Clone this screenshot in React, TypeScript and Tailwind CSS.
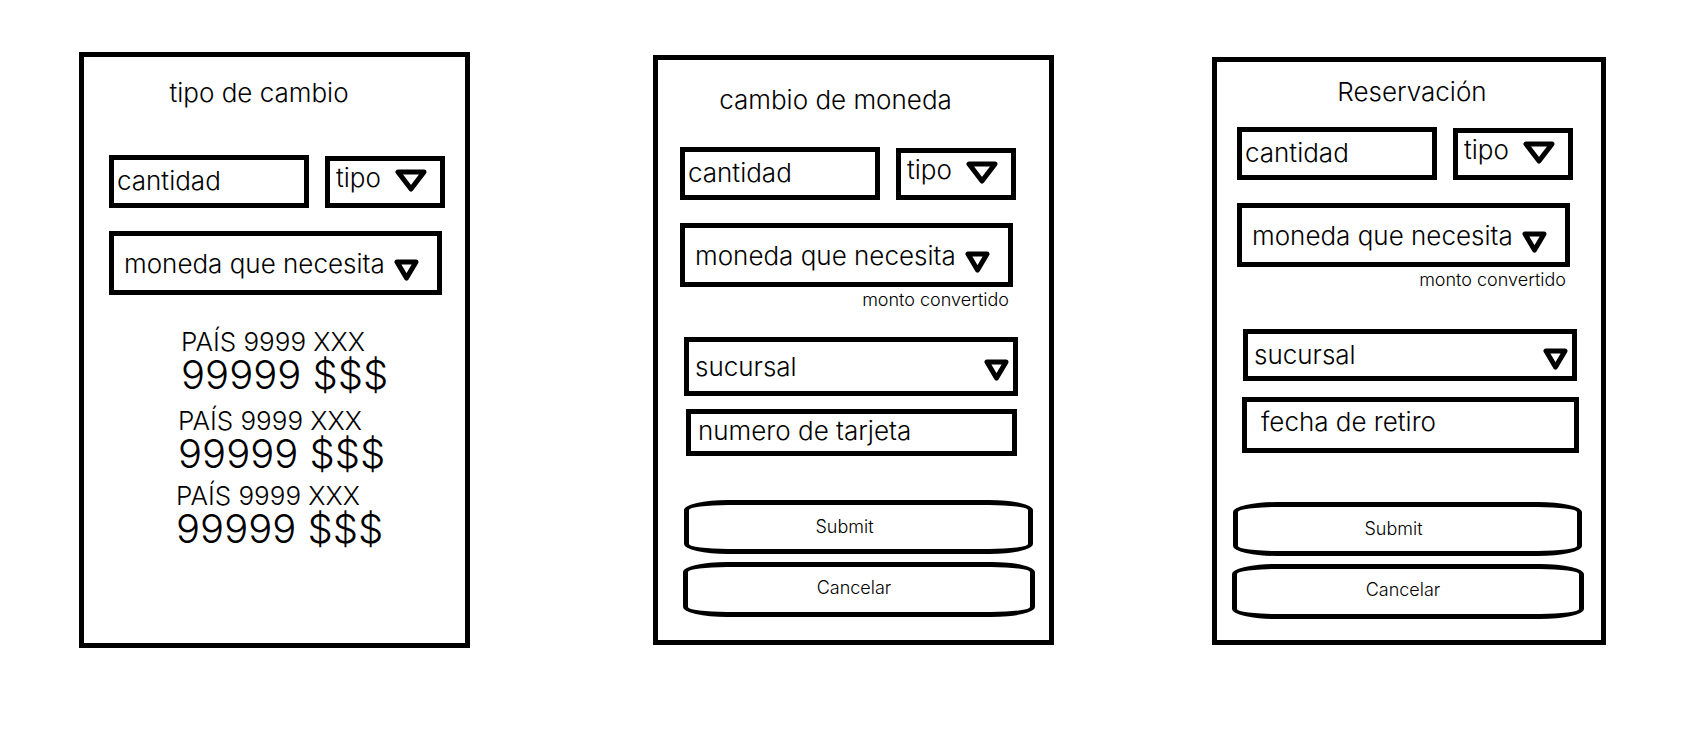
import React from "react";

const wideTriangle = "M3 3 H29 L16 20 Z";
const smallTriangle = "M3 3 H22 L12.5 19 Z";

function Triangle({ wide = false, className }: { wide?: boolean; className: string }) {
  const width = wide ? 32 : 25;
  const height = wide ? 23 : 22;
  return (
    <svg
      aria-hidden="true"
      width={width}
      height={height}
      viewBox={`0 0 ${width} ${height}`}
      className={`pointer-events-none absolute ${className}`}
    >
      <path
        d={wide ? wideTriangle : smallTriangle}
        fill="none"
        stroke="#000"
        strokeWidth="5"
        strokeLinejoin="round"
      />
    </svg>
  );
}

function TextField({ label, className }: { label: string; className: string }) {
  return (
    <input
      type="text"
      aria-label={label}
      placeholder={label}
      className={`block w-0 min-w-0 border-5 border-black bg-white leading-8 placeholder:text-black placeholder:opacity-100 ${className}`}
    />
  );
}

function SelectField({
  label,
  wide,
  className,
  selectClassName,
  arrowClassName,
}: {
  label: string;
  wide?: boolean;
  className: string;
  selectClassName: string;
  arrowClassName: string;
}) {
  return (
    <div className={`relative ${className}`}>
      <select
        aria-label={label}
        className={`block w-full appearance-none border-5 border-black bg-white leading-8 ${selectClassName}`}
      >
        <option>{label}</option>
      </select>
      <Triangle wide={wide} className={arrowClassName} />
    </div>
  );
}

function AmountFields() {
  return (
    <>
      <div className="flex items-end gap-4">
        <TextField label="cantidad" className="h-[53px] flex-1 pb-0.5 pl-[3px]" />
        <SelectField
          label="tipo"
          wide
          className="w-[120px]"
          selectClassName="h-[52px] pb-2 pl-1.5"
          arrowClassName="right-[18px] top-[13px]"
        />
      </div>
      <SelectField
        label="moneda que necesita"
        className="mr-[3px] mt-[23px]"
        selectClassName="h-16 pl-2.5 pt-0.5"
        arrowClassName="right-[23px] top-7"
      />
    </>
  );
}

function Actions() {
  return (
    <div className="flex flex-col gap-2 text-lg">
      <button type="submit" className="ml-px mr-0.5 h-[54px] rounded-[44px/10px] border-5 border-black pr-7">
        Submit
      </button>
      <button type="button" className="h-[55px] rounded-[44px/10px] border-5 border-black pb-1 pr-2.5">
        Cancelar
      </button>
    </div>
  );
}

function Rate({ className }: { className: string }) {
  return (
    <li className={className}>
      <p className="leading-8">PAÍS 9999 XXX</p>
      <p className="text-[40px] leading-[34px]">99999 $$$</p>
    </li>
  );
}

export default function App() {
  return (
    <main className="grid min-h-[740px] grid-cols-[391fr_183fr_401fr_158fr_394fr] items-start bg-white pl-[79px] pr-[97px] pt-[52px] font-['Inter',sans-serif] text-[26px] font-light text-black">
      <section className="min-h-[596px] border-5 border-black pl-[25px] pr-5 pt-5">
        <h1 className="pr-9 text-center leading-8">tipo de cambio</h1>
        <form className="mt-[46px]">
          <AmountFields />
        </form>
        <ul className="mt-[31px] pl-[67px]">
          <Rate className="pl-[5px]" />
          <Rate className="mt-[13px] pl-0.5" />
          <Rate className="mt-[9px]" />
        </ul>
      </section>

      <section className="col-start-3 mt-[3px] min-h-[590px] border-5 border-black pb-[23px] pl-[22px] pr-3.5 pt-6">
        <h1 className="pr-11 text-center leading-8">cambio de moneda</h1>
        <form className="mt-[31px]">
          <div className="mr-[19px]">
            <AmountFields />
            <p className="pr-[7px] text-right text-lg leading-[26px]">monto convertido</p>
          </div>
          <SelectField
            label="sucursal"
            className="ml-1 mr-[17px] mt-6"
            selectClassName="h-[59px] pl-1.5"
            arrowClassName="right-[9px] top-[22px]"
          />
          <div className="ml-1.5 mr-[18px] mt-[13px] flex">
            <TextField label="numero de tarjeta" className="h-[47px] flex-1 pb-1 pl-[7px]" />
          </div>
          <div className="ml-[3px] mt-11">
            <Actions />
          </div>
        </form>
      </section>

      <section className="col-start-5 mt-[5px] min-h-[588px] border-5 border-black pb-[21px] pl-[15px] pr-[17px] pt-3.5">
        <h1 className="pl-2 text-center leading-8">Reservación</h1>
        <form className="mt-[19px]">
          <div className="ml-[5px] mr-[11px]">
            <AmountFields />
            <p className="pr-[7px] text-right text-lg leading-[26px]">monto convertido</p>
          </div>
          <SelectField
            label="sucursal"
            className="ml-[11px] mr-[7px] mt-9"
            selectClassName="h-[52px] pl-1.5"
            arrowClassName="right-[9px] top-[19px]"
          />
          <div className="ml-2.5 mr-[5px] mt-4 flex">
            <TextField label="fecha de retiro" className="h-14 flex-1 pb-2 pl-3.5" />
          </div>
          <div className="mt-[49px]">
            <Actions />
          </div>
        </form>
      </section>
    </main>
  );
}
